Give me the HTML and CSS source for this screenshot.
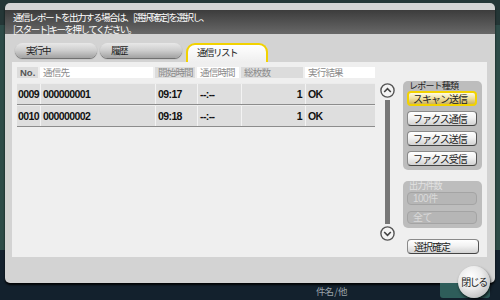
FILE: index.html
```html
<!DOCTYPE html>
<html lang="ja">
<head>
  <meta charset="UTF-8" />
  <title>通信リスト</title>
  <link rel="stylesheet" href="styles.css">
</head>
<body>

<div class="screen">

  <div class="dialog">
    <div class="header">通信レポートを出力する場合は、[選択確定]を選択し、<br>[スタート]キーを押してください。</div>

    <div class="tabs">
      <div class="tab">実行中</div>
      <div class="tab">履歴</div>
      <div class="tab active">通信リスト</div>
    </div>

    <div class="panel">
      <div class="list">
        <div class="list-head">
          <div class="hcell no">No.</div>
          <div class="hcell light">通信先</div>
          <div class="hcell">開始時間</div>
          <div class="hcell light">通信時間</div>
          <div class="hcell">総枚数</div>
          <div class="hcell light">実行結果</div>
        </div>

        <div class="row">
          <div class="cell">0009</div>
          <div class="cell">000000001</div>
          <div class="cell">09:17</div>
          <div class="cell">--:--</div>
          <div class="cell num">1</div>
          <div class="cell">OK</div>
        </div>
        <div class="row">
          <div class="cell">0010</div>
          <div class="cell">000000002</div>
          <div class="cell">09:18</div>
          <div class="cell">--:--</div>
          <div class="cell num">1</div>
          <div class="cell">OK</div>
        </div>
      </div>

      <div class="scroll">
        <svg class="arrow" width="15" height="15" viewBox="0 0 15 15">
          <circle cx="7.5" cy="7.5" r="6.6" fill="#f4f4f4" stroke="#555" stroke-width="1.4"/>
          <path d="M4.2 9 L7.5 5.6 L10.8 9" fill="none" stroke="#444" stroke-width="1.6"/>
        </svg>
        <div class="bar"></div>
        <svg class="arrow" width="15" height="15" viewBox="0 0 15 15">
          <circle cx="7.5" cy="7.5" r="6.6" fill="#f4f4f4" stroke="#555" stroke-width="1.4"/>
          <path d="M4.2 6 L7.5 9.4 L10.8 6" fill="none" stroke="#444" stroke-width="1.6"/>
        </svg>
      </div>

      <div class="side">
        <div class="group">
          <div class="group-label">レポート種類</div>
          <div class="btn selected">スキャン送信</div>
          <div class="btn">ファクス通信</div>
          <div class="btn">ファクス送信</div>
          <div class="btn">ファクス受信</div>
        </div>

        <div class="group off">
          <div class="group-label">出力件数</div>
          <div class="btn">100件</div>
          <div class="btn">全て</div>
        </div>

        <div class="btn confirm">選択確定</div>
      </div>
    </div>
  </div>

  <div class="under">
    <div class="under-text">件名 / 他</div>
    <div class="under-btn"></div>
  </div>

  <div class="close">閉じる</div>
</div>

</body>
</html>
```

FILE: styles.css
```css
* { margin: 0; padding: 0; box-sizing: border-box; }

body {
  width: 500px;
  height: 300px;
  overflow: hidden;
  font-family: "Noto Sans CJK JP", "Liberation Sans", sans-serif;
  background: linear-gradient(to bottom, #243636 0, #243636 25px, #2d4b48 25px, #2d4b48 250px, #13212d 250px);
}

.screen {
  position: relative;
  width: 500px;
  height: 300px;
}

.dialog {
  margin: 3px 5px 0 5px;
  height: 280px;
  padding-top: 7px;
  background: #d3d3d3;
  border-radius: 5px;
  box-shadow: 0 2px 2px rgba(0, 0, 0, 0.85);
}

.header {
  height: 24px;
  padding: 1px 8px 0;
  background: linear-gradient(#3c3c3c, #686868);
  color: #fff;
  font-size: 9.5px;
  line-height: 12px;
  letter-spacing: -1.5px;
  white-space: nowrap;
}

.tabs {
  display: flex;
  align-items: flex-start;
  height: 19px;
  margin-top: 9px;
  padding-left: 10px;
}

.tab {
  width: 82px;
  height: 15px;
  margin-right: 3px;
  padding-left: 11px;
  border-radius: 8px;
  background: linear-gradient(#e8e8e8, #cdcdcd 50%, #a2a2a2);
  box-shadow: 0 1px 1px #666;
  color: #222;
  font-size: 9.5px;
  line-height: 15px;
  letter-spacing: -1.5px;
}

.tab.active {
  height: 19px;
  margin-left: 1px;
  padding-left: 9px;
  border: 2px solid #f2d200;
  border-bottom: none;
  border-radius: 9px 9px 0 0;
  background: linear-gradient(#ffffff, #efefef);
  box-shadow: none;
  line-height: 14px;
}

.panel {
  display: flex;
  height: 195px;
  margin: 0 8px 0 7px;
  padding-top: 5px;
  background: #efefef;
}

.list {
  width: 358px;
  margin-left: 5px;
}

.list-head, .row {
  display: grid;
  grid-template-columns: 23px 115px 42px 44px 64px 70px;
}

.list-head {
  height: 11px;
  margin-bottom: 5px;
}

.hcell {
  margin-right: 2px;
  padding-left: 3px;
  background: #dcdcdc;
  color: #8a8a8a;
  font-size: 9.5px;
  line-height: 11px;
  letter-spacing: -0.8px;
  white-space: nowrap;
}

.hcell.light { background: #fff; }
.hcell:last-child { margin-right: 0; }

.hcell.no {
  color: #555;
  font-family: "Liberation Sans", sans-serif;
  font-weight: bold;
  letter-spacing: 0;
}

.row {
  height: 22px;
  background: #dedede;
  border-top: 1px solid #ececec;
  border-bottom: 1px solid #8c8c8c;
}

.cell {
  padding-left: 2px;
  border-left: 1px solid #f3f3f3;
  color: #111;
  font-family: "Liberation Sans", sans-serif;
  font-weight: bold;
  font-size: 10.5px;
  line-height: 20px;
  letter-spacing: -0.6px;
}

.cell:first-child { border-left: none; padding-left: 1px; }
.cell.num { text-align: right; padding-right: 3px; }

.scroll {
  display: flex;
  flex-direction: column;
  align-items: center;
  width: 15px;
  margin-left: 5px;
  padding-top: 16px;
}

.arrow { display: block; }

.bar {
  width: 5px;
  height: 124px;
  margin: 2px 0;
  background: #777;
}

.side {
  width: 79px;
  margin-left: 8px;
  padding-top: 14px;
}

.group {
  padding: 0 5px 4px 4px;
  border-radius: 5px;
  background: #bdbdbd;
}

.group-label {
  height: 10px;
  padding-left: 2px;
  color: #222;
  font-size: 9px;
  line-height: 10px;
  letter-spacing: -0.8px;
  white-space: nowrap;
}

.btn {
  height: 15px;
  margin-top: 5px;
  padding-left: 5px;
  border: 1px solid #8a8a8a;
  border-right-color: #555;
  border-bottom-color: #444;
  border-radius: 4px;
  background: linear-gradient(#ffffff, #f2f2f2 45%, #d2d2d2);
  color: #222;
  font-size: 10px;
  line-height: 13px;
  letter-spacing: -1px;
  white-space: nowrap;
}

.group .group-label + .btn { margin-top: 0; }

.btn.selected {
  border: 2px solid #f2d200;
  padding-left: 4px;
  background: linear-gradient(#fffbe4, #eedfa0 50%, #cdb25c);
  line-height: 11px;
}

.group.off {
  margin-top: 11px;
}

.off .group-label {
  height: 11px;
  color: #e2e2e2;
}

.off .btn {
  height: 13px;
  margin-top: 6px;
  border: 1px solid #a4a4a4;
  background: #b6b6b6;
  color: #dadada;
  font-family: "Liberation Sans", "Noto Sans CJK JP", sans-serif;
  font-size: 10px;
  line-height: 11px;
  letter-spacing: -0.5px;
}

.off .group-label + .btn { margin-top: 0; }

.btn.confirm {
  width: 72px;
  margin: 11px 0 0 4px;
  padding-left: 6px;
}

.under {
  display: flex;
  align-items: flex-start;
  height: 17px;
}

.under-text {
  margin: 3px 0 0 316px;
  color: #9aa2a8;
  font-size: 9.5px;
  line-height: 10px;
  letter-spacing: -1px;
}

.under-btn {
  width: 50px;
  height: 15px;
  margin-left: auto;
  margin-right: 10px;
  border-radius: 0 0 3px 3px;
  background: #2e5d5a;
}

.close {
  position: absolute;
  left: 458px;
  top: 263px;
  width: 32px;
  height: 32px;
  border-radius: 50%;
  background: radial-gradient(circle at 40% 35%, #ffffff, #ececec 40%, #a9a9a9 100%);
  box-shadow: 1px 2px 3px rgba(0, 0, 0, 0.75);
  color: #222;
  font-size: 10px;
  line-height: 32px;
  letter-spacing: -1.5px;
  text-align: center;
}
```
